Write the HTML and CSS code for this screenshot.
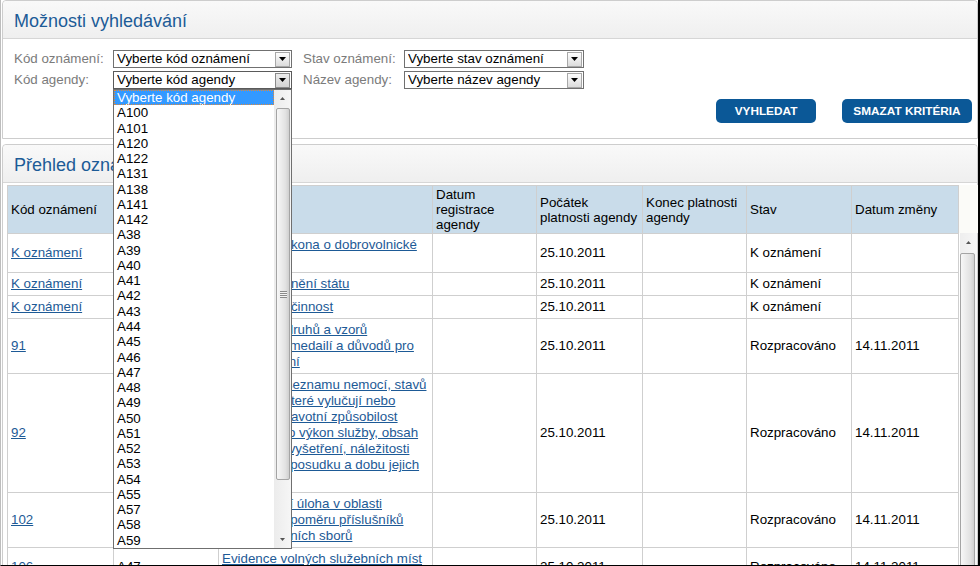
FILE: index.html
```html
<!DOCTYPE html>
<html lang="cs">
<head>
<meta charset="utf-8">
<title>Možnosti vyhledávání</title>
<link rel="stylesheet" href="styles.css">
</head>
<body>
<div class="frame">
  <section class="panel">
    <h2 class="panel-title">Možnosti vyhledávání</h2>
    <div class="search-body">
      <div class="form-grid">
        <span class="lbl">Kód oznámení:</span>
        <div class="select"><span class="select-text">Vyberte kód oznámení</span><span class="select-btn"><svg width="7" height="4" viewBox="0 0 7 4"><path d="M0 0h7L3.5 4z" fill="#000"/></svg></span></div>
        <span class="lbl">Stav oznámení:</span>
        <div class="select select-wide"><span class="select-text">Vyberte stav oznámení</span><span class="select-btn"><svg width="7" height="4" viewBox="0 0 7 4"><path d="M0 0h7L3.5 4z" fill="#000"/></svg></span></div>
        <span class="lbl">Kód agendy:</span>
        <div class="select select-open"><span class="select-text">Vyberte kód agendy</span><span class="select-btn"><svg width="7" height="4" viewBox="0 0 7 4"><path d="M0 0h7L3.5 4z" fill="#000"/></svg></span></div>
        <span class="lbl">Název agendy:</span>
        <div class="select select-wide"><span class="select-text">Vyberte název agendy</span><span class="select-btn"><svg width="7" height="4" viewBox="0 0 7 4"><path d="M0 0h7L3.5 4z" fill="#000"/></svg></span></div>
      </div>
      <div class="actions">
        <button class="btn btn-search">VYHLEDAT</button>
        <button class="btn btn-clear">SMAZAT KRITÉRIA</button>
      </div>
    </div>
  </section>

  <section class="panel">
    <h2 class="panel-title">Přehled oznámení</h2>
    <div class="results-body">
      <table class="grid">
        <colgroup>
          <col class="c1"><col class="c2"><col class="c3"><col class="c4"><col class="c5"><col class="c6"><col class="c7"><col class="c8">
        </colgroup>
        <thead>
          <tr>
            <th>Kód oznámení</th>
            <th>Kód agendy</th>
            <th>Název</th>
            <th>Datum registrace agendy</th>
            <th>Počátek platnosti agendy</th>
            <th>Konec platnosti agendy</th>
            <th>Stav</th>
            <th>Datum změny</th>
          </tr>
        </thead>
        <tbody>
          <tr>
            <td><a href="#">K oznámení</a></td>
            <td>A100</td>
            <td><a href="#">Úkoly ze zákona o dobrovolnické službě</a></td>
            <td></td>
            <td>25.10.2011</td>
            <td></td>
            <td>K oznámení</td>
            <td></td>
          </tr>
          <tr>
            <td><a href="#">K oznámení</a></td>
            <td>A101</td>
            <td><a href="#">Agenda bránění státu</a></td>
            <td></td>
            <td>25.10.2011</td>
            <td></td>
            <td>K oznámení</td>
            <td></td>
          </tr>
          <tr>
            <td><a href="#">K oznámení</a></td>
            <td>A120</td>
            <td><a href="#">Vzdělávací činnost</a></td>
            <td></td>
            <td>25.10.2011</td>
            <td></td>
            <td>K oznámení</td>
            <td></td>
          </tr>
          <tr>
            <td><a href="#">91</a></td>
            <td>A44</td>
            <td><a href="#">Stanovení druhů a vzorů služebních medailí a důvodů pro jejich udělení</a></td>
            <td></td>
            <td>25.10.2011</td>
            <td></td>
            <td>Rozpracováno</td>
            <td>14.11.2011</td>
          </tr>
          <tr>
            <td><a href="#">92</a></td>
            <td>A45</td>
            <td><a href="#">Stanovení seznamu nemocí, stavů nebo vad, které vylučují nebo omezují zdravotní způsobilost žadatele pro výkon služby, obsah lékařských vyšetření, náležitosti lékařského posudku a dobu jejich platnosti</a></td>
            <td></td>
            <td>25.10.2011</td>
            <td></td>
            <td>Rozpracováno</td>
            <td>14.11.2011</td>
          </tr>
          <tr>
            <td><a href="#">102</a></td>
            <td>A46</td>
            <td><a href="#">Koordinační úloha v oblasti služebního poměru příslušníků bezpečnostních sborů</a></td>
            <td></td>
            <td>25.10.2011</td>
            <td></td>
            <td>Rozpracováno</td>
            <td>14.11.2011</td>
          </tr>
          <tr>
            <td><a href="#">106</a></td>
            <td>A47</td>
            <td><a href="#">Evidence volných služebních míst a jejich obsazování</a></td>
            <td></td>
            <td>25.10.2011</td>
            <td></td>
            <td>Rozpracováno</td>
            <td>14.11.2011</td>
          </tr>
        </tbody>
      </table>
      <div class="vs-col">
        <div class="vs-head"></div>
        <div class="vs">
          <div class="vs-arrow"><svg width="5" height="3" viewBox="0 0 5 3"><path d="M0 3h5L2.5 0z" fill="#555"/></svg></div>
          <div class="vs-thumb"></div>
        </div>
      </div>
    </div>
  </section>

  <div class="dropdown">
    <ul class="dd-list">
      <li class="dd-sel">Vyberte kód agendy</li>
      <li>A100</li><li>A101</li><li>A120</li><li>A122</li><li>A131</li><li>A138</li><li>A141</li><li>A142</li>
      <li>A38</li><li>A39</li><li>A40</li><li>A41</li><li>A42</li><li>A43</li><li>A44</li><li>A45</li><li>A46</li>
      <li>A47</li><li>A48</li><li>A49</li><li>A50</li><li>A51</li><li>A52</li><li>A53</li><li>A54</li><li>A55</li>
      <li>A57</li><li>A58</li><li>A59</li>
    </ul>
    <div class="dd-scroll">
      <div class="dd-arrow"><svg width="5" height="3" viewBox="0 0 5 3"><path d="M0 3h5L2.5 0z" fill="#555"/></svg></div>
      <div class="dd-thumb"><span class="grip"></span></div>
      <div class="dd-track"></div>
      <div class="dd-arrow"><svg width="5" height="3" viewBox="0 0 5 3"><path d="M0 0h5L2.5 3z" fill="#555"/></svg></div>
    </div>
  </div>
</div>
</body>
</html>
```

FILE: styles.css
```css
* { box-sizing: border-box; }

html, body { margin: 0; padding: 0; background: #fff; }

body {
  font-family: "Liberation Sans", Arial, sans-serif;
  font-size: 13.33px;
  color: #000;
}

.frame {
  position: relative;
  width: 980px;
  height: 566px;
  overflow: hidden;
  background: #fff;
  border-left: 1px solid #bdbdbd;
  border-right: 2px solid #000;
  border-bottom: 1px solid #000;
}

.panel {
  margin-left: 1px;
  border: 1px solid #cdcdcd;
  border-radius: 4px 4px 0 0;
  background: #fff;
}

.panel + .panel { margin-top: 5px; }

.panel-title {
  margin: 0;
  height: 38px;
  padding: 9px 0 0 11px;
  font-size: 18px;
  line-height: 22px;
  font-weight: normal;
  color: #1c5b97;
  background: linear-gradient(#f9f9f9, #efefef);
  border-bottom: 1px solid #d6d6d6;
  border-radius: 4px 4px 0 0;
}

/* search form */
.search-body { padding: 11px 5px 15px 11px; }

.form-grid {
  display: grid;
  grid-template-columns: 99px 190px 101px 180px;
  row-gap: 3px;
  align-items: center;
}

.lbl {
  color: #7b7b7b;
  line-height: 18px;
  white-space: nowrap;
}

.select {
  display: flex;
  align-items: center;
  width: 179px;
  height: 18px;
  padding-left: 3px;
  border: 1px solid #707070;
  background: #fff;
}

.select-wide { width: 180px; }

.select-open { border-color: #5a5a5a; }

.select-text {
  flex: 1;
  white-space: nowrap;
  overflow: hidden;
  line-height: 16px;
}

.select-btn {
  display: flex;
  align-items: center;
  justify-content: center;
  width: 15px;
  height: 15px;
  margin-right: 1px;
  border: 1px solid #a8a8a8;
  background: linear-gradient(#fdfdfd, #dcdcdc);
}

.select-open .select-btn { border-color: #8a8a8a; background: linear-gradient(#ececec, #d4d4d4); }

.actions {
  display: flex;
  justify-content: flex-end;
  gap: 26px;
  margin-top: 10px;
}

.btn {
  height: 24px;
  padding: 0;
  border: 0;
  border-radius: 5px;
  background: #0b5897;
  color: #fff;
  font: bold 11.8px "Liberation Sans", Arial, sans-serif;
}

.btn-search { width: 100px; }
.btn-clear { width: 130px; }

/* results */
.results-body {
  display: flex;
  align-items: flex-start;
  padding: 2px 0 0 4px;
}

.grid {
  flex: none;
  width: 951px;
  table-layout: fixed;
  border-collapse: collapse;
}

.c1 { width: 106px; }
.c2 { width: 105px; }
.c3 { width: 214px; }
.c4 { width: 104px; }
.c5 { width: 106px; }
.c6 { width: 104px; }
.c7 { width: 105px; }
.c8 { width: 107px; }

.grid th,
.grid td {
  border: 1px solid #cfcfcf;
  padding: 3px 3px;
  line-height: 16px;
  text-align: left;
  vertical-align: middle;
  font-weight: normal;
}

.grid th {
  background: #c9dcea;
  line-height: 15px;
  padding: 1px 3px;
}

.grid a { color: #1d5a96; text-decoration: underline; }

.vs-col {
  flex: none;
  width: 19px;
  align-self: stretch;
  display: flex;
  flex-direction: column;
}

.vs-head { height: 48px; background: #fbfbf8; }

.vs {
  flex: 1;
  margin-left: 1px;
  width: 17px;
  background: linear-gradient(to right, #eeeeee, #f6f6f6);
  display: flex;
  flex-direction: column;
}

.vs-arrow, .dd-arrow {
  height: 17px;
  display: flex;
  align-items: center;
  justify-content: center;
}

.vs-arrow { height: 19px; }

.vs-thumb {
  height: 400px;
  margin: 1px 2px 0 0;
  border: 1px solid #a4a4a4;
  border-radius: 2px;
  background: linear-gradient(to right, #f7f7f7, #e2e2e2 70%, #cfcfcf);
}

/* open dropdown list */
.dropdown {
  position: absolute;
  left: 112px;
  top: 89px;
  width: 179px;
  height: 460px;
  display: flex;
  border: 1px solid #6f6f6f;
  background: #fff;
}

.dd-list {
  flex: 1;
  margin: 0;
  padding: 0;
  list-style: none;
  line-height: 15.27px;
}

.dd-list li {
  padding-left: 3px;
  white-space: nowrap;
}

.dd-list .dd-sel {
  background: #3399ff;
  color: #fff;
  outline: 1px dotted #e0893a;
  outline-offset: -1px;
}

.dd-scroll {
  flex: none;
  width: 17px;
  display: flex;
  flex-direction: column;
  background: linear-gradient(to right, #ececec, #f6f6f6);
}

.dd-thumb {
  height: 372px;
  margin: 1px 1px 0 2px;
  border: 1px solid #a4a4a4;
  border-radius: 2px;
  background: linear-gradient(to right, #f7f7f7, #e2e2e2 70%, #cfcfcf);
  display: flex;
  align-items: center;
  justify-content: center;
}

.grip {
  width: 7px;
  height: 7px;
  background: repeating-linear-gradient(#8a8a8a 0 1px, #f4f4f4 1px 2px);
}

.dd-track { flex: 1; }
```
